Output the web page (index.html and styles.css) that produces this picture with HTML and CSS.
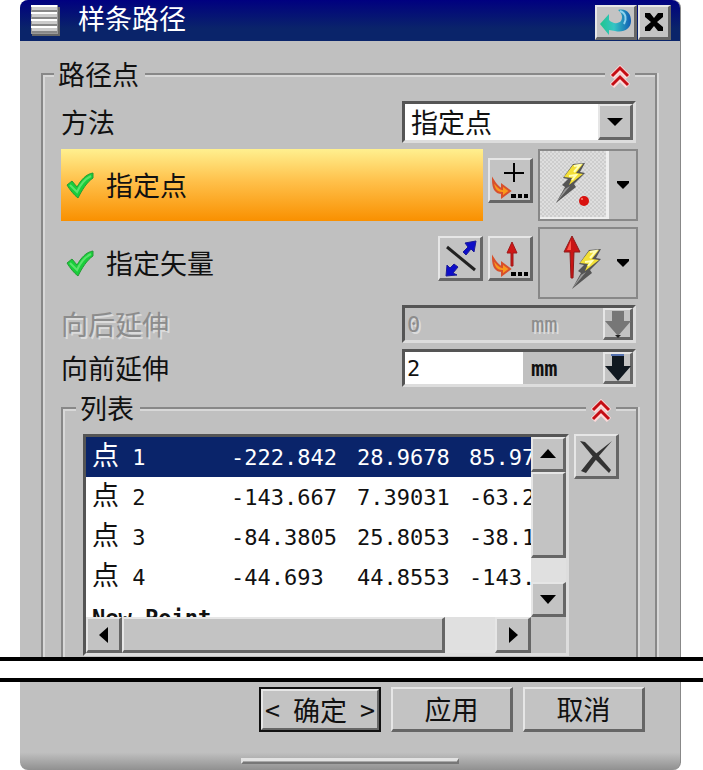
FILE: index.html
```html
<!DOCTYPE html>
<html lang="zh-CN">
<head>
    <meta charset="UTF-8">
    <meta name="viewport" content="width=device-width, initial-scale=1.0">
    <title>样条路径</title>
    <link rel="stylesheet" href="styles.css">
</head>
<body>
    <main class="dialog">
        <header class="titlebar">
            <svg class="menu-icon" width="30" height="32" viewBox="0 0 30 32">
                <path d="M3 2h26v29H1v-3z" fill="#666"/>
                <path d="M0 0h27v29H0z" fill="#999"/>
                <path d="M1 1h25v5H1zM1 8h25v5H1zM1 15h25v5H1zM1 22h25v5H1z" fill="#ccc"/>
                <path d="M0 1h26M0 8h26M0 15h26M0 22h26" stroke="#fff" stroke-width="2"/>
                <path d="M1 6h25M1 13h25M1 20h25M1 27h25" stroke="#888" stroke-width="2"/>
            </svg>
            <h1>样条路径</h1>
            <button class="btn reset" aria-label="重置">
                <svg width="34" height="30" viewBox="0 0 34 30">
                    <defs>
                        <linearGradient id="swirl"><stop offset="0" stop-color="#1fc58d"/><stop offset=".45" stop-color="#35c5c4"/><stop offset="1" stop-color="#105cb4"/></linearGradient>
                    </defs>
                    <path d="M1 17 10 7v6c4 4 9 4 12 1 2-4 1-8-3-11 9-2 13 4 13 11 0 8-8 12-16 10l-6-1v5z" fill="url(#swirl)"/>
                    <path d="M21 4c6 2 7 8 4 13" stroke="#8ed2ef" stroke-width="2" fill="none"/>
                </svg>
            </button>
            <button class="btn close" aria-label="关闭">
                <svg width="22" height="22" viewBox="0 0 22 22"><path d="M2 2h5l4 5 4-5h5v4l-6 5 6 5v4h-5l-4-5-4 5H2v-4l6-5-6-5z"/></svg>
            </button>
        </header>

        <div class="body">
            <fieldset class="path">
                <legend>路径点</legend>
                <button class="fold" aria-label="折叠">
                    <svg width="20" height="24" viewBox="0 0 20 24"><path d="m2 12 8-8 8 8M2 21l8-8 8 8" fill="none" stroke="#ffd9d9" stroke-width="6"/><path d="m2 11 8-8 8 8M2 20l8-8 8 8" fill="none" stroke="#c40d14" stroke-width="3"/></svg>
                </button>
                <div class="rows">
                    <div class="row">
                        <label for="metodo">方法</label>
                        <div class="combo sunken">
                            <select id="metodo">
                                <option>指定点</option>
                            </select>
                            <span class="btn drop"><svg width="18" height="10" viewBox="0 0 18 10"><path d="M1 1h16L9 9z"/></svg></span>
                        </div>
                    </div>

                    <div class="row tall">
                        <div class="step active">
                            <svg class="check" width="28" height="28" viewBox="0 0 28 28"><path d="m1 14 5-4 5 6C15 9 20 3 27 2v5C21 11 16 19 12 27 8 24 4 19 1 14z" fill="#19ce3b" stroke="#269a36" stroke-width="1"/><path d="m4 14 7 7C14 14 19 8 25 5" stroke="#5ae36c" stroke-width="2" fill="none"/></svg>
                            指定点
                        </div>
                        <button class="btn tool" aria-label="点对话框">
                            <svg width="42" height="42" viewBox="0 0 42 42"><path d="M15 14h20M25 4v19" stroke="#000" stroke-width="2"/><path d="M4 21c3 5 5 8 9 9v-4l8 6-8 6v-4C7 34 4 29 4 21z" fill="#f99a1c" stroke="#d8502c" stroke-width="2"/><path d="M22 35h5v4h-5zM29 35h4v4h-4zM35 35h4v4h-4z"/></svg>
                        </button>
                        <div class="split">
                            <button class="pressed" aria-label="自动判断的点">
                                <svg width="66" height="66" viewBox="0 0 66 66"><path d="m33 13 12-1-5 9 5 1-11 11 2 3-20 16 9-16-3-2 6-6-5-1z" fill="#555"/><path d="m33 14 10-1-7 9 7 1-14 11 3-7-8-1z" fill="#f3df36"/><path d="m34 15 6-1-6 7M29 25l7-1-4 5" stroke="#ffffb9" stroke-width="2" fill="none"/><path d="m30 35-14 17 9-14z" fill="#999"/><circle cx="44" cy="50" r="5" fill="#d9120f"/><circle cx="42" cy="48" r="1" fill="#ff8577"/></svg>
                            </button>
                            <button class="more" aria-label="更多点类型"><svg width="14" height="8" viewBox="0 0 14 8"><path d="M1 0h12v2L7 8 1 2z"/></svg></button>
                        </div>
                    </div>

                    <div class="row tall">
                        <div class="step">
                            <svg class="check" width="28" height="28" viewBox="0 0 28 28"><path d="m1 14 5-4 5 6C15 9 20 3 27 2v5C21 11 16 19 12 27 8 24 4 19 1 14z" fill="#19ce3b" stroke="#269a36" stroke-width="1"/><path d="m4 14 7 7C14 14 19 8 25 5" stroke="#5ae36c" stroke-width="2" fill="none"/></svg>
                            指定矢量
                        </div>
                        <button class="btn tool" aria-label="反向">
                            <svg width="42" height="42" viewBox="0 0 42 42"><path d="m8 10 28 23" stroke="#222" stroke-width="3"/><path d="m24 15 5-5-3-4 11-2-2 11-3-3-5 6zM15 27l4 3-5 6 4 2-11 1 1-11 3 3z" fill="#0d0dc8" stroke="#1b1b97"/></svg>
                        </button>
                        <button class="btn tool" aria-label="矢量对话框">
                            <svg width="42" height="42" viewBox="0 0 42 42"><path d="m23 5 5 11h-4v13h-2V16h-4z" fill="#cf1717" stroke="#a01919"/><path d="M4 21c3 5 5 8 9 9v-4l8 6-8 6v-4C7 34 4 29 4 21z" fill="#f99a1c" stroke="#d8502c" stroke-width="2"/><path d="M22 35h5v4h-5zM29 35h4v4h-4zM35 35h4v4h-4z"/></svg>
                        </button>
                        <div class="split">
                            <button class="plain" aria-label="自动判断的矢量">
                                <svg width="66" height="66" viewBox="0 0 66 66"><path d="m30 6 8 16h-6l-1 26h-2l-1-26h-6z" fill="#c91515" stroke="#8e1a1a"/><path d="m29 10-4 10h4z" fill="#ff5549"/><g transform="translate(14 7)"><path d="m33 13 12-1-5 9 5 1-11 11 2 3-20 16 9-16-3-2 6-6-5-1z" fill="#555"/><path d="m33 14 10-1-7 9 7 1-14 11 3-7-8-1z" fill="#f3df36"/><path d="m34 15 6-1-6 7M29 25l7-1-4 5" stroke="#ffffb9" stroke-width="2" fill="none"/><path d="m30 35-14 17 9-14z" fill="#999"/></g></svg>
                            </button>
                            <button class="more" aria-label="更多矢量类型"><svg width="14" height="8" viewBox="0 0 14 8"><path d="M1 0h12v2L7 8 1 2z"/></svg></button>
                        </div>
                    </div>

                    <div class="row off">
                        <label for="indietro">向后延伸</label>
                        <div class="measure sunken">
                            <input type="text" id="indietro" value="0" disabled>
                            <span class="unit">mm</span>
                            <button class="btn arrow" disabled aria-label="选项"><svg width="28" height="30" viewBox="0 0 28 30"><path d="M8 2h12v10h7L14 27 1 12h7z" fill="#777"/><path d="M11 26h6l-3 3z" fill="#222"/></svg></button>
                        </div>
                    </div>

                    <div class="row">
                        <label for="avanti">向前延伸</label>
                        <div class="measure sunken">
                            <input type="text" id="avanti" value="2">
                            <span class="unit">mm</span>
                            <button class="btn arrow" aria-label="选项"><svg width="28" height="30" viewBox="0 0 28 30"><path d="M8 3h12v10h7L14 28 1 13h7z" fill="#101820"/><path d="M7 2h13" stroke="#5572b0" stroke-width="2"/></svg></button>
                        </div>
                    </div>

                    <fieldset class="list">
                        <legend>列表</legend>
                        <button class="fold" aria-label="折叠">
                            <svg width="20" height="24" viewBox="0 0 20 24"><path d="m2 12 8-8 8 8M2 21l8-8 8 8" fill="none" stroke="#ffd9d9" stroke-width="6"/><path d="m2 11 8-8 8 8M2 20l8-8 8 8" fill="none" stroke="#c40d14" stroke-width="3"/></svg>
                        </button>
                        <div class="list-area">
                            <div class="listbox sunken">
                                <div class="view">
                                    <table>
                                        <colgroup><col class="c-name"><col class="c-x"><col class="c-y"><col class="c-z"></colgroup>
                                        <tr class="selected"><td><span>点</span> 1</td><td>-222.842</td><td>28.9678</td><td>85.97</td></tr>
                                        <tr><td><span>点</span> 2</td><td>-143.667</td><td>7.39031</td><td>-63.2</td></tr>
                                        <tr><td><span>点</span> 3</td><td>-84.3805</td><td>25.8053</td><td>-38.1</td></tr>
                                        <tr><td><span>点</span> 4</td><td>-44.693</td><td>44.8553</td><td>-143.</td></tr>
                                        <tr class="new"><td colspan="4">New Point</td></tr>
                                    </table>
                                </div>
                                <div class="vbar">
                                    <button class="btn" aria-label="向上"><svg width="16" height="10" viewBox="0 0 16 10"><path d="M0 9h16L8 0z"/></svg></button>
                                    <div class="btn thumb"></div>
                                    <div class="track"></div>
                                    <button class="btn" aria-label="向下"><svg width="16" height="10" viewBox="0 0 16 10"><path d="M0 1h16l-8 9z"/></svg></button>
                                </div>
                                <div class="hbar">
                                    <button class="btn" aria-label="向左"><svg width="10" height="16" viewBox="0 0 10 16"><path d="M9 0v16L0 8z"/></svg></button>
                                    <div class="btn thumb"></div>
                                    <div class="track"></div>
                                    <button class="btn" aria-label="向右"><svg width="10" height="16" viewBox="0 0 10 16"><path d="M1 0v16l9-8z"/></svg></button>
                                </div>
                            </div>
                            <button class="btn tool" aria-label="移除">
                                <svg width="42" height="42" viewBox="0 0 42 42"><path d="m5 6 5 1 13 13 13 15-2 3-15-15z" fill="#333"/><path d="m37 6-14 16-12 16-5-2 12-15z" fill="#333"/></svg>
                            </button>
                        </div>
                    </fieldset>
                </div>
            </fieldset>
        </div>
    </main>

    <!-- interruzione della finestra -->
    <div class="break"></div>

    <footer class="dialog bottom">
        <div class="buttons">
            <button class="btn ok"><span>&lt;</span> 确定 <span>&gt;</span></button>
            <button class="btn">应用</button>
            <button class="btn">取消</button>
        </div>
        <div class="grip"></div>
    </footer>
</body>
</html>
```

FILE: styles.css
```css
* {
    box-sizing: border-box;
}

body {
    margin: 0;
    background-color: white;
    color: #111;
    font-family: "DejaVu Sans Mono", "Noto Sans CJK SC", monospace;
    font-size: 22px;
}

h1, label, legend, .step, select, .buttons, td span {
    font-family: "Noto Sans CJK SC", sans-serif;
    font-size: 27px;
    font-weight: normal;
    line-height: 30px;
}

button {
    font: inherit;
    color: inherit;
    padding: 0;
}

svg {
    display: block;
    flex: none;
}

.dialog {
    margin: 0 22px 0 20px;
    background-color: #c0c0c0;
    border-right: 1px solid #888;
}

main.dialog {
    border-radius: 8px 8px 0 0;
}

/* Rilievo dei pulsanti */
.btn {
    display: flex;
    align-items: center;
    justify-content: center;
    background-color: #c3c3c3;
    border: solid;
    border-width: 2px 3px 3px 2px;
    border-color: #e6e6e6 #666 #666 #e6e6e6;
}

.sunken {
    border: 3px solid;
    border-color: #555 #ddd #ddd #555;
}

/* Barra del titolo */
.titlebar {
    display: flex;
    align-items: center;
    height: 41px;
    padding: 0 9px 0 11px;
    border-radius: 8px 8px 0 0;
    background: linear-gradient(#000080, #0a246a 70%);
    color: white;
}

.titlebar h1 {
    flex: 1;
    margin: 0 0 6px 17px;
}

.titlebar .btn {
    height: 35px;
    margin-top: 4px;
}

.reset {
    width: 42px;
}

.close {
    width: 33px;
    margin-left: 1px;
}

/* Gruppi */
.body {
    padding: 18px 23px 0 21px;
}

fieldset {
    position: relative;
    min-width: 0;
    margin: 0;
    padding: 12px 17px 0 18px;
    border: 2px solid #888;
    border-bottom: none;
    box-shadow: inset 2px 2px #d8d8d8, 2px 0 #d8d8d8;
}

fieldset.list {
    padding: 11px 17px 1px 20px;
}

legend {
    margin-left: -7px;
    padding: 0 6px 0 4px;
    background-color: #c0c0c0;
}

.fold {
    position: absolute;
    top: -24px;
    right: 20px;
    padding: 0 5px;
    border: none;
    background-color: #c0c0c0;
}

.rows {
    display: flex;
    flex-direction: column;
    gap: 6px;
}

.row {
    display: flex;
    align-items: center;
    gap: 5px;
}

.row label {
    flex: 1;
}

.tall {
    height: 72px;
}

/* Casella a discesa */
.combo {
    position: relative;
    width: 234px;
    height: 42px;
    margin-right: 2px;
    background-color: white;
}

.combo select {
    width: 100%;
    height: 36px;
    padding: 0 6px;
    border: none;
    appearance: none;
    background: white;
    color: #111;
}

.drop {
    position: absolute;
    top: 0;
    right: 0;
    width: 35px;
    height: 36px;
    pointer-events: none;
}

/* Passi */
.step {
    display: flex;
    flex: 1;
    align-items: center;
    gap: 12px;
    height: 72px;
    padding-left: 5px;
}

.active {
    background: linear-gradient(#fff08f, #ffc04a 45%, #f99000);
}

.tool {
    flex: none;
    width: 45px;
    height: 45px;
}

.tall .tool {
    margin-bottom: 9px;
}

.split {
    display: flex;
    width: 100px;
    height: 72px;
    border: 2px solid #888;
}

.split button {
    display: flex;
    align-items: center;
    justify-content: center;
    border: none;
    background: none;
}

.split .pressed, .split .plain {
    width: 69px;
}

.split .pressed {
    border-right: 3px solid #eee;
    border-bottom: 2px solid #eee;
    background: repeating-conic-gradient(#cdcdcd 0 25%, #dedede 0 50%) 0 0 / 4px 4px;
}

.split .more {
    flex: 1;
}

/* Valori con unita */
.measure {
    display: flex;
    align-items: center;
    width: 234px;
    height: 38px;
    margin-right: 2px;
}

.measure input {
    width: 118px;
    height: 32px;
    padding: 0 2px;
    border: none;
    background-color: white;
    color: #111;
    font: inherit;
}

.unit {
    flex: 1;
    padding-left: 8px;
    font-weight: bold;
}

.arrow {
    width: 30px;
    height: 32px;
}

.off, .off input:disabled {
    color: #8c8c8c;
    text-shadow: 2px 2px #dcdcdc;
}

.off input:disabled {
    background-color: #c0c0c0;
}

.off .unit {
    font-weight: normal;
}

/* Lista dei punti */
.list-area {
    display: flex;
    align-items: flex-start;
    gap: 5px;
}

.listbox {
    display: grid;
    flex: 1;
    grid-template-columns: minmax(0, 1fr) 35px;
    grid-template-rows: 180px 36px;
}

.view {
    overflow: hidden;
    background-color: white;
}

table {
    width: 100%;
    table-layout: fixed;
    border-collapse: collapse;
}

.c-name { width: 145px; }
.c-x { width: 126px; }
.c-y { width: 112px; }

td {
    height: 40px;
    padding: 2px 0 0;
    line-height: 38px;
    white-space: nowrap;
}

td:first-child {
    padding-left: 6px;
}

.selected {
    background-color: #0a246a;
    color: white;
}

.new {
    font-weight: bold;
}

.vbar, .hbar {
    display: flex;
    background-color: #e0e0e0;
}

.vbar {
    flex-direction: column;
}

.vbar button {
    height: 35px;
}

.vbar .thumb {
    height: 86px;
}

.hbar button {
    width: 36px;
}

.hbar .thumb {
    flex: 321;
}

.hbar .track {
    flex: 50;
}

.vbar .track {
    flex: 1;
}

.break {
    height: 25px;
    border: solid black;
    border-width: 4px 0;
    background-color: white;
}

/* Parte bassa */
.bottom {
    padding-top: 5px;
    border-radius: 0 0 8px 8px;
    background: linear-gradient(#c0c0c0 80%, #909090);
}

.buttons {
    display: flex;
    justify-content: flex-end;
    gap: 10px;
    padding-right: 35px;
}

.buttons .btn {
    width: 122px;
    height: 45px;
}

.buttons .ok {
    justify-content: space-between;
    padding: 0 2px;
    outline: 2px solid #111;
    outline-offset: -2px;
    border-width: 4px;
}

.grip {
    width: 33%;
    height: 6px;
    margin: 26px auto 0;
    border: solid;
    border-width: 3px 2px 2px;
    border-color: #e2e2e2 #777 #777 #e2e2e2;
}

.bottom::after {
    content: "";
    display: block;
    height: 6px;
}
```
